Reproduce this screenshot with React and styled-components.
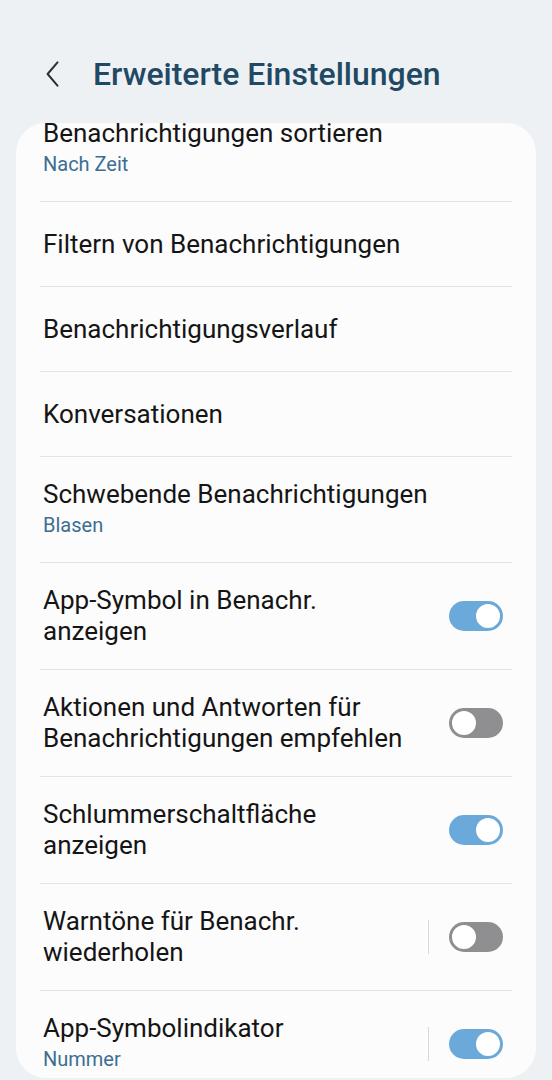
import React from 'react'
import styled, { createGlobalStyle } from 'styled-components'

const GlobalStyle = createGlobalStyle`
	html, body {
		margin: 0;
		padding: 0;
		background: #eef1f4;
	}
	body {
		font-family: Roboto, 'Noto Sans', sans-serif;
	}
`

const items = [
	{ title: 'Benachrichtigungen sortieren', sub: 'Nach Zeit' },
	{ title: 'Filtern von Benachrichtigungen' },
	{ title: 'Benachrichtigungsverlauf' },
	{ title: 'Konversationen' },
	{ title: 'Schwebende Benachrichtigungen', sub: 'Blasen' },
	{ title: 'App-Symbol in Benachr.\nanzeigen', toggle: true },
	{ title: 'Aktionen und Antworten für\nBenachrichtigungen empfehlen', toggle: false },
	{ title: 'Schlummerschaltfläche\nanzeigen', toggle: true },
	{ title: 'Warntöne für Benachr.\nwiederholen', toggle: false, split: true },
	{ title: 'App-Symbolindikator', sub: 'Nummer', toggle: true, split: true },
]

const Toggle = ({ on }) => (
	<Track on={on ? 1 : 0}>
		<Knob on={on ? 1 : 0} />
	</Track>
)

const App = () => (
	<Page>
		<GlobalStyle />
		<Header>
			<BackIcon viewBox='0 0 20 30' aria-hidden>
				<path d='M15 2 L4 15 L15 28' fill='none' stroke='#2b2f33' strokeWidth='2.2' strokeLinecap='round' strokeLinejoin='round' />
			</BackIcon>
			<Title>Erweiterte Einstellungen</Title>
		</Header>
		<Card>
			<List>
				{items.map((it, i) => (
					<Row key={i} last={i === items.length - 1}>
						<Texts>
							<ItemTitle>{it.title}</ItemTitle>
							{it.sub && <ItemSub>{it.sub}</ItemSub>}
						</Texts>
						{it.split && <Split />}
						{it.toggle !== undefined && <Toggle on={it.toggle} />}
					</Row>
				))}
			</List>
		</Card>
	</Page>
)

export default App

const Page = styled.div`
	height: 100vh;
	display: flex;
	flex-direction: column;
	background: #eef1f4;
	overflow: hidden;
`

const Header = styled.div`
	display: flex;
	align-items: center;
	height: 123px;
	padding: 25px 0 0 44px;
	box-sizing: border-box;
`

const BackIcon = styled.svg`
	width: 18px;
	height: 30px;
	margin-right: 31px;
`

const Title = styled.h1`
	margin: 0;
	font-size: 32px;
	font-weight: 500;
	color: #1f4965;
`

const Card = styled.div`
	flex: 1;
	margin: 0 16px 2px 16px;
	background: #fcfcfc;
	border-radius: 30px;
	overflow: hidden;
`

const List = styled.div`
	margin-top: -27px;
	padding: 0 24px;
`

const Row = styled.div`
	display: flex;
	align-items: center;
	min-height: 85px;
	padding: 22px 0 22px 3px;
	box-sizing: border-box;
	border-bottom: ${p => (p.last ? 'none' : '1px solid #e4e4e4')};
`

const Texts = styled.div`
	flex: 1;
	display: flex;
	flex-direction: column;
`

const ItemTitle = styled.div`
	font-size: 26px;
	line-height: 31px;
	color: #151515;
	white-space: pre-line;
`

const ItemSub = styled.div`
	font-size: 20px;
	line-height: 30px;
	color: #3d6e92;
`

const Split = styled.div`
	width: 1px;
	height: 34px;
	background: #d8d8d8;
	margin-right: 20px;
`

const Track = styled.div`
	position: relative;
	width: 54px;
	height: 30px;
	border-radius: 15px;
	background: ${p => (p.on ? '#6aa9da' : '#8f8f91')};
	margin-right: 9px;
	flex-shrink: 0;
`

const Knob = styled.div`
	position: absolute;
	top: 1px;
	left: ${p => (p.on ? '25px' : '1px')};
	width: 28px;
	height: 28px;
	border-radius: 50%;
	box-sizing: border-box;
	background: #fff;
	border: 2px solid ${p => (p.on ? '#6aa9da' : '#8f8f91')};
`
